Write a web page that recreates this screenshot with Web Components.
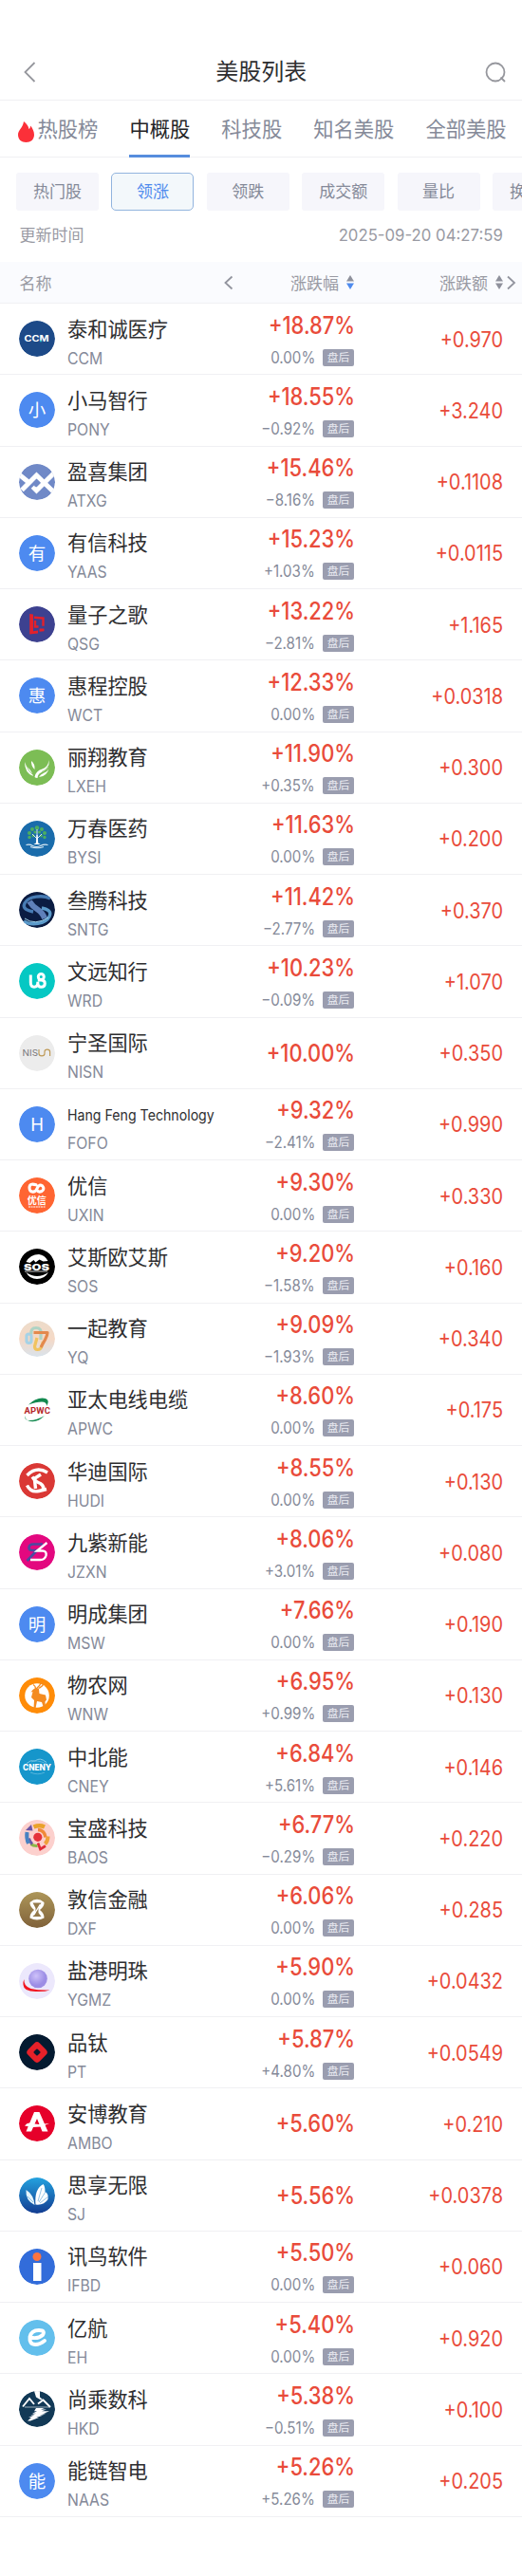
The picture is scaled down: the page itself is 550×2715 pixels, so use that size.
<!DOCTYPE html>
<html lang="zh-CN">
<head>
<meta charset="utf-8">
<title>美股列表</title>
<style>
  body {
    margin: 0;
    background: #fff;
    color: #2e2e30;
    font-family: Inter, "Noto Sans CJK SC", sans-serif;
    --up: #e94b3a;
    --blue: #4f8bee;
    --grey: #999aa3;
    --slate: #858a99;
    --line: #f0f0f3;
  }
</style>
</head>
<body>
<stock-page></stock-page>

<script>
  const STOCKS = [
    ['泰和诚医疗', 'CCM', '+18.87%', '0.00%', '+0.970'],
    ['小马智行', 'PONY', '+18.55%', '-0.92%', '+3.240'],
    ['盈喜集团', 'ATXG', '+15.46%', '-8.16%', '+0.1108'],
    ['有信科技', 'YAAS', '+15.23%', '+1.03%', '+0.0115'],
    ['量子之歌', 'QSG', '+13.22%', '-2.81%', '+1.165'],
    ['惠程控股', 'WCT', '+12.33%', '0.00%', '+0.0318'],
    ['丽翔教育', 'LXEH', '+11.90%', '+0.35%', '+0.300'],
    ['万春医药', 'BYSI', '+11.63%', '0.00%', '+0.200'],
    ['叁腾科技', 'SNTG', '+11.42%', '-2.77%', '+0.370'],
    ['文远知行', 'WRD', '+10.23%', '-0.09%', '+1.070'],
    ['宁圣国际', 'NISN', '+10.00%', '', '+0.350'],
    ['Hang Feng Technology', 'FOFO', '+9.32%', '-2.41%', '+0.990'],
    ['优信', 'UXIN', '+9.30%', '0.00%', '+0.330'],
    ['艾斯欧艾斯', 'SOS', '+9.20%', '-1.58%', '+0.160'],
    ['一起教育', 'YQ', '+9.09%', '-1.93%', '+0.340'],
    ['亚太电线电缆', 'APWC', '+8.60%', '0.00%', '+0.175'],
    ['华迪国际', 'HUDI', '+8.55%', '0.00%', '+0.130'],
    ['九紫新能', 'JZXN', '+8.06%', '+3.01%', '+0.080'],
    ['明成集团', 'MSW', '+7.66%', '0.00%', '+0.190'],
    ['物农网', 'WNW', '+6.95%', '+0.99%', '+0.130'],
    ['中北能', 'CNEY', '+6.84%', '+5.61%', '+0.146'],
    ['宝盛科技', 'BAOS', '+6.77%', '-0.29%', '+0.220'],
    ['敦信金融', 'DXF', '+6.06%', '0.00%', '+0.285'],
    ['盐港明珠', 'YGMZ', '+5.90%', '0.00%', '+0.0432'],
    ['品钛', 'PT', '+5.87%', '+4.80%', '+0.0549'],
    ['安博教育', 'AMBO', '+5.60%', '', '+0.210'],
    ['思享无限', 'SJ', '+5.56%', '', '+0.0378'],
    ['讯鸟软件', 'IFBD', '+5.50%', '0.00%', '+0.060'],
    ['亿航', 'EH', '+5.40%', '0.00%', '+0.920'],
    ['尚乘数科', 'HKD', '+5.38%', '-0.51%', '+0.100'],
    ['能链智电', 'NAAS', '+5.26%', '+5.26%', '+0.205']
  ];

  // [disc colour, artwork], drawn in a 38 x 38 box and clipped to the disc
  const LOGOS = {
    CCM: ['#1d4a88', `
      <text x="5.500" y="22.200" font-size="8.500" font-weight="700" fill="#fff" textLength="26" lengthAdjust="spacingAndGlyphs">CCM</text>
      <path d="M22 20.800h2v1.500h-2z" fill="#28c4cc"/>`],
    ATXG: ['#7089c7', `
      <g fill="none" stroke="#fff" stroke-width="5">
        <path d="M3 27.500 18.500 12 36 29"/>
        <path d="M37 9.500 18.500 28l-4-4"/>
        <path d="M0 11l11 9"/>
      </g>
      <path d="M15 19.500l3.500-3.500 3.500 3.500-5 5z" fill="#7089c7"/>`],
    QSG: ['#3d4190', `
      <path d="M11.200 8 15 8.400v17.800l5-.6v2.800l-8.800 1.200z" fill="#e3212b"/>
      <path d="M16 11.800l9.500.8v8.200M17 15v6.500h3.500" fill="none" stroke="#e3212b" stroke-width="2.400"/>
      <path d="M21.500 23.500h5v2.800l-5 .5z" fill="#e3212b"/>`],
    LXEH: ['#7cbd55', `
      <g fill="#fff">
        <path d="M6 13q0 12 9 15-2-6-5-8.500Q7 17 6 13z"/>
        <path d="M13 12q4 3 3.500 9-4-4-3.500-9z"/>
        <path d="M31.500 11q-1 8-7 9.500-7 2-8 8.500 1 1 3 1 0-5 6.500-7 6.500-3 5.500-12z"/>
        <path d="M32 18q-1 5-5.500 6.500-4 1.500-5.500 4.500 9-.5 11-11z"/>
      </g>
      <path d="M8 17q2 6 6 9M31 17q-2 5-7 6.500" stroke="#7cbd55" stroke-width=".7" fill="none"/>`],
    BYSI: ['#1a6cab', `
      <g fill="#4bad60">
        <circle cx="19" cy="7.500" r="2.300"/><circle cx="14" cy="9" r="2"/><circle cx="24" cy="9" r="2"/>
        <circle cx="11" cy="13" r="2"/><circle cx="27" cy="13" r="2"/><circle cx="17" cy="12" r="1.600"/>
        <circle cx="21.500" cy="12" r="1.600"/><circle cx="11" cy="17.500" r="1.700"/><circle cx="27" cy="17.500" r="1.700"/>
        <circle cx="15" cy="16" r="1.400"/><circle cx="23.500" cy="16" r="1.400"/>
      </g>
      <path d="M19 9v14M19 19l-5-5M19 19l5-5" stroke="#e9f4f8" stroke-width=".9" fill="none"/>
      <path d="M18.500 15h1.100l.6 8.500 2.500 1.500h-7.400l2.600-1.500z" fill="#fff"/>
      <path d="M7.500 25.500q4-1 7 1 4 2 8 0 4-2 8-1M12 27.500q7 2.500 14 0" stroke="#dcebf4" stroke-width="1.200" fill="none"/>`],
    SNTG: ['#0b1c42', `
      <g fill="none" stroke-width="3.400">
        <path d="M33 7C25 3 10 4.500 6 12c-3 6 4 8 9 9" stroke="#477bb3"/>
        <path d="M11 10q3 5 8.500 8.500T27 28" stroke="#5f80ba" stroke-width="6"/>
        <path d="M5 31c8 5 23 3 27-5 3-6-3-8-8-9" stroke="#5b9aca"/>
      </g>
      <path d="M6 28q11 8 25-1" stroke="#a4d6ed" fill="none"/>`],
    WRD: ['#05c8c3', `
      <g fill="none" stroke="#fff" stroke-width="3" stroke-linejoin="round">
        <path d="M12.300 12.500v8q0 4.700 3.700 4.700t3.800-4.500v-1M19.800 20.700q0 4.500 3.500 4.500 4 0 4-3.800 0-3.500-4-3.500h-3.500"/>
        <circle cx="23.300" cy="14.500" r="3"/>
      </g>`],
    NISN: ['#ececec', `
      <text x="3.500" y="22.200" font-size="9.500" fill="#77777a" textLength="16.500" lengthAdjust="spacingAndGlyphs">NIS</text>
      <path d="M21 15v4.500q0 2.300 3 2.300t3-2.300v-2q0-2.300 2.800-2.300t2.800 2.300V22" fill="none" stroke="#bf9b59" stroke-width="1.200"/>`],
    UXIN: ['#ff6532', `
      <path d="M18 7.800q-7-2.300-7 3 0 4.500 4 4.300 3.200-.3 4.500-4.300 2-4 5-2 3 3.300-.5 5.700-3.500 1.500-5-1" fill="none" stroke="#fff" stroke-width="3.100" stroke-linecap="round"/>
      <text x="8.800" y="28.300" font-size="10" font-weight="700" fill="#fff">优信</text>
      <path d="M10 31h18" stroke="#fff" stroke-width="1.200" stroke-dasharray="2 .6"/>`],
    SOS: ['#000', `
      <path d="M7.500 14Q12 6 21 6q6 .5 9.500 7l-5 .5-4-2-4 3-2-2.500-4 3z" fill="#fff"/>
      <path d="M31 25q-4 7-12 7T7.500 25Q19 33 31 25z" fill="#fff"/>
      <text x="5" y="22.600" font-size="9" font-weight="900" fill="#fff" textLength="27" lengthAdjust="spacingAndGlyphs">SOS</text>
      <path d="M6 24h24" stroke="#fff" stroke-width=".8"/>`],
    YQ: ['url(#dawn)', `
      <g fill="none" stroke-width="3.200" stroke-linejoin="round">
        <path d="M8 16v5q0 2.500 2.500 2.500T13 21v-5q0-2-2.500-2T8 16z" stroke="#a5d2e7"/>
        <path d="M13 14q-1-6.500 5-6.500t5 6.500v6" stroke="#aed3c4"/>
        <path d="M19 18l-2.500 9q0 3.500 3 3.500t4-2.500l2-6" stroke="#f1c35f"/>
        <path d="M15.500 12.500H30q0 3-2.500 7.500L23 28" stroke="#e3894d"/>
      </g>`],
    APWC: ['#fff', `
      <path d="M10 13.500Q19 5 28 7q5 2 1 8 .5-4.500-5-4.500-6 0-14 3z" fill="#12894f"/>
      <path d="M7 24.500q-2 5 3 5.500 8 .5 17-5-9 9-18 5-3-2-2-5.500z" fill="#12894f"/>
      <text x="5.500" y="22.600" font-size="9.500" font-weight="700" fill="#b5272b" textLength="27.500" lengthAdjust="spacing" font-family="Roboto">APWC</text>`],
    HUDI: ['#da3835', `
      <g fill="none" stroke="#fff" stroke-width="3.400">
        <path d="M8.500 13q10-10 21.500-3"/>
        <path d="M23 12l-7 4.500q1 3 6.500 5 5 3 2 8"/>
        <path d="M8.500 23.500q4 8 12.500 6l8-2"/>
        <path d="M14 14.500l2.500 3.500 1 9"/>
      </g>`],
    JZXN: ['#e3087f', `
      <g fill="none">
        <path d="M25 10.500H15q-4 0-4.500 3.500-.2 3 3.500 3h5L8.500 28" stroke="#4b4aa0" stroke-width="2.600"/>
        <path d="M29.500 9 19 17.500h6q4.500.5 3.500 5-1.300 4.500-6 4.500H12" stroke="#fff" stroke-width="2.400"/>
      </g>`],
    WNW: ['#ff8c08', `
      <circle cx="19" cy="19" r="12.800" fill="#fff"/>
      <path d="M14.500 13l3.500-2.500 3 1.500.5 5 6.500 1.500 1 5-1.500 2 .5 6.500H26l-2-6-5-1-1.500 7.500h-2l.5-8.500-3-3 1.500-6-2 .5z" fill="#f48b20"/>
      <path d="M17.500 11.500q0-2.500-2.500-4M19 11q3-2 4.500-6M20.500 11.500q4.500-2 6-6" fill="none" stroke="#f48b20" stroke-width="1.300"/>`],
    CNEY: ['#1696cb', `
      <path d="M8 15.500q4-4 9-2.500 5-4.500 12 1.500" fill="none" stroke="#8dcfe9" stroke-width=".9"/>
      <path d="M13 14q5-3 16 2M12 25q8 3.500 15 0" fill="none" stroke="#65bbdf" stroke-width=".8"/>
      <text x="4" y="22.500" font-size="8.500" font-weight="800" fill="#fff" textLength="30" lengthAdjust="spacingAndGlyphs">CNENY</text>`],
    BAOS: ['#fcd0cd', `
      <g fill="none" stroke-width="4">
        <path d="M15.500 7.500q6-2.500 11.500 0" stroke="#eaa22b" stroke-width="4.500"/>
        <path d="M20 10.500q7 .5 8 8" stroke="#f08939" stroke-width="3.500"/>
        <path d="M30.500 17.500q0 5-3 8" stroke="#efa13a"/>
        <path d="M12.500 25.500q3 2.500 7 2" stroke="#8cb849" stroke-width="3"/>
        <path d="M10.500 19.500q1 4 3.500 6" stroke="#6955a5" stroke-width="3"/>
        <path d="M8.500 13q-1 6 1.500 12" stroke="#4882c1"/>
      </g>
      <path d="M7 11l6-6 1.500 6.500z" fill="#6955a5"/>
      <circle cx="19.800" cy="18.300" r="4.600" fill="#e5323b"/>
      <path d="M20 24.500l2.500 6.500 5.500-3.500" fill="none" stroke="#df2c37" stroke-width="2.700"/>`],
    DXF: ['url(#bronze)', `
      <path d="M11.500 11q7.500-6.500 15 0 .5 4-4.500 8 5 4 4.500 8.500-7.500 4-15 0Q11 23 16 19q-5-4-4.500-8z" fill="#fff"/>
      <path d="M14.500 11.500h9l-3 5.500v5l3 4h-9l3-4v-5z" fill="#94794a"/>
      <path d="M15.500 24.500l7-11.500" stroke="#fff" stroke-width="1.300"/>`],
    YGMZ: ['#ece8fc', `
      <circle cx="20" cy="16.500" r="9.800" fill="url(#pearl)"/>
      <path d="M5.500 17q-1 7 7 10 8 1.800 20 1.500-6 2-15 1.500Q5 30 4.500 23q-.3-4 1-6z" fill="#f21420"/>`],
    PT: ['#041a30', `
      <rect x="10.300" y="10.300" width="17.400" height="17.400" rx="4" fill="#e62129" transform="rotate(45 19 19)"/>
      <rect x="16.200" y="16.200" width="5.600" height="5.600" rx="1" fill="#041a30" transform="rotate(45 19 19)"/>`],
    AMBO: ['#e6002a', `
      <path d="M16 7h5.500L30.500 27.500h-6L19 14l-6 13.500H7.500z" fill="#fff"/>
      <path d="M6 21.500q3-4 7-2.500l8 1 11-1-9 3.500-9 .5z" fill="#fff"/>`],
    SJ: ['url(#sea)', `
      <path d="M7.500 13q-1 11 9 16-1-11-9-16z" fill="#e5f5fc"/>
      <path d="M17.500 28.500Q16 12 25.500 7q2 2 2 8 4 2 3 8-4 6.500-13 5.500z" fill="#fff"/>
      <path d="M9 20l6 6M20 25l4-14M21 26l7-11M22 27l9-7" stroke="#69a9d8" fill="none" stroke-width=".7"/>`],
    IFBD: ['#326cda', `
      <circle cx="19" cy="8.500" r="4.500" fill="#fb7440"/>
      <path d="M15 15h8.500v19H15z" fill="#fff"/>`],
    EH: ['#63bfec', `
      <path d="M12 18.500q8 2 13-2.500 3-5-4-5-8 0-9.500 7-1 8 6 8 4.500 0 9.500-4" fill="none" stroke="#fff" stroke-width="3.900" stroke-linecap="round"/>`],
    HKD: ['#123956', `
      <path d="M16 0h6v6.500l3 2.500-2 .5-5-3z" fill="#fff"/>
      <path d="M4 16.500 11 8l5 6M20 13.500l5.500-4L33 17" fill="none" stroke="#fff" stroke-width="1.900"/>
      <path d="M6 17h26" stroke="#fff" stroke-width=".6"/>
      <path d="M18 18h9l-4 1.600h6l-5 1.600h8l-6 2.600h3l-7 1.600h4l-8 2.600h3l-9 3.500H9l4-3.500h-3l6-2.600h-4l6-1.600h-4l5-2.600h-3z" fill="#fff"/>`]
  };

  class StockLogo extends HTMLElement {
    connectedCallback() {
      const code = this.getAttribute('code');
      const [fill, art] = LOGOS[code] || ['#4d8af0', `
        <text x="19" y="25.700" font-size="18.500" fill="#fff" text-anchor="middle">${this.getAttribute('letter')}</text>`];
      this.attachShadow({ mode: 'open' }).innerHTML = `
        <style>
          :host { display: block; width: 38px; height: 38px; border-radius: 50%; overflow: hidden; }
          svg { display: block; }
        </style>
        <svg width="38" height="38" viewBox="0 0 38 38">
          <defs>
            <radialGradient id="pearl" cx=".4" cy=".35">
              <stop offset="0" stop-color="#cec2fa"/><stop offset="1" stop-color="#9c8de5"/>
            </radialGradient>
            <linearGradient id="sea" x2="0" y2="1">
              <stop offset="0" stop-color="#24a2df"/><stop offset="1" stop-color="#123c91"/>
            </linearGradient>
            <linearGradient id="dawn" x2="0" y2="1">
              <stop offset="0" stop-color="#ecdccb"/><stop offset=".5" stop-color="#f5d9c6"/><stop offset="1" stop-color="#d9e3ec"/>
            </linearGradient>
            <linearGradient id="bronze" x2="0" y2="1">
              <stop offset="0" stop-color="#ad9659"/><stop offset="1" stop-color="#80623a"/>
            </linearGradient>
          </defs>
          <circle cx="19" cy="19" r="19" fill="${fill}"/>
          ${art}
        </svg>`;
    }
  }

  class PageHeader extends HTMLElement {
    constructor() {
      super();
      this.attachShadow({ mode: 'open' }).innerHTML = `
        <style>
          :host {
            box-sizing: border-box;
            display: flex;
            align-items: center;
            justify-content: space-between;
            height: 106px;
            padding: 46px 17px 0 24.500px;
            border-bottom: 1px solid var(--line);
          }
          .title { font-size: 24px; line-height: 32px; padding-right: 5px; }
          svg { fill: none; stroke: #96979d; stroke-width: 1.8; }
        </style>
        <svg width="20" height="22"><path d="M11.500 1 1.500 11l10 10"/></svg>
        <span class="title"><slot></slot></span>
        <svg width="22" height="22"><circle cx="11" cy="11" r="9.500"/><path d="M16.500 16.500l4.500 4.500"/></svg>`;
    }
  }

  class MarketTabs extends HTMLElement {
    constructor() {
      super();
      this.attachShadow({ mode: 'open' }).innerHTML = `
        <style>
          :host {
            box-sizing: border-box;
            display: flex;
            height: 60px;
            padding-left: 18.500px;
            gap: 33px;
            border-bottom: 1px solid var(--line);
            font-size: 21.300px;
            line-height: 60px;
            white-space: nowrap;
            color: var(--slate);
          }
          span { flex: none; box-sizing: border-box; height: 60px; }
          .hot { display: flex; align-items: center; gap: 4px; }
          .hot svg { margin-top: 5px; }
          .on { color: #242426; border-bottom: 3px solid #568ddd; }
        </style>
        <span class="hot">
          <svg width="17" height="22" viewBox="0 0 17 22"><path d="M6 0c3 2 5 5 5.500 8 1-.5 1.500-2 1.500-3.500 2 2 4 6 4 9.500 0 5-3.500 8-8.500 8S0 19 0 14C0 9 5 7 6 0z" fill="#fb3039"/></svg>
          热股榜
        </span>
        <span class="on">中概股</span>
        <span>科技股</span>
        <span>知名美股</span>
        <span>全部美股</span>`;
    }
  }

  class FilterChips extends HTMLElement {
    constructor() {
      super();
      this.attachShadow({ mode: 'open' }).innerHTML = `
        <style>
          :host {
            display: flex;
            gap: 13.400px;
            padding: 16px 0 0 17px;
            overflow: hidden;
            font-size: 17px;
            color: var(--slate);
          }
          span {
            flex: none;
            box-sizing: border-box;
            width: 87px;
            height: 40px;
            line-height: 40px;
            text-align: center;
            border-radius: 3px;
            background: #f6f6fb;
          }
          .on { line-height: 38px; border: 1px solid #92b4de; border-radius: 5px; background: #f3f8fb; color: var(--blue); }
        </style>
        <span>热门股</span>
        <span class="on">领涨</span>
        <span>领跌</span>
        <span>成交额</span>
        <span>量比</span>
        <span>换手率</span>`;
    }
  }

  class UpdateTime extends HTMLElement {
    constructor() {
      super();
      this.attachShadow({ mode: 'open' }).innerHTML = `
        <style>
          :host {
            display: flex;
            justify-content: space-between;
            height: 54px;
            padding: 0 20.500px 0 20.500px;
            font-size: 17px;
            line-height: 53px;
            color: var(--grey);
          }
          .time { transform: scaleX(.985); transform-origin: right; }
        </style>
        <span>更新时间</span>
        <span class="time"><slot></slot></span>`;
    }
  }

  class SortArrows extends HTMLElement {
    constructor() {
      super();
      this.attachShadow({ mode: 'open' }).innerHTML = `
        <style>:host { display: block; } svg { display: block; }</style>
        <svg width="8" height="15" viewBox="0 0 8 15">
          <path d="M4 0l4 6.500H0z" fill="#8f919c"/>
          <path d="M4 15l4-6.500H0z" fill="${this.hasAttribute('down') ? '#4f8bee' : '#8f919c'}"/>
        </svg>`;
    }
  }

  class TableHead extends HTMLElement {
    constructor() {
      super();
      this.attachShadow({ mode: 'open' }).innerHTML = `
        <style>
          :host {
            box-sizing: border-box;
            display: grid;
            grid-template-columns: 215px 137.500px 157px auto;
            align-items: center;
            height: 44px;
            padding-left: 20.500px;
            border-bottom: 1px solid var(--line);
            background: #fafbfe;
            font-size: 17px;
            color: var(--grey);
          }
          div { display: flex; align-items: center; gap: 8px; }
          .col { justify-content: flex-end; }
          .pct { justify-content: space-between; }
          svg { display: block; fill: none; stroke: #92949e; stroke-width: 1.800; }
          .next { margin-left: 4px; }
        </style>
        <span>名称</span>
        <div class="pct">
          <svg width="10" height="16"><path d="M8.500 1.500 1.500 8l7 6.500"/></svg>
          <div>涨跌幅<sort-arrows down></sort-arrows></div>
        </div>
        <div class="col">涨跌额<sort-arrows></sort-arrows></div>
        <svg class="next" width="10" height="16"><path d="M1 1.500 8 8l-7 6.500"/></svg>`;
    }
  }

  class StockRow extends HTMLElement {
    connectedCallback() {
      const [name, code, pct, after, change] = this.data;
      const small = name.length > 8 ? 'small' : '';
      const sub = after
        ? `<div class="sub"><span class="num">${after.replace('-', '−')}</span><span class="badge">盘后</span></div>`
        : '';
      this.attachShadow({ mode: 'open' }).innerHTML = `
        <style>
          :host {
            box-sizing: border-box;
            display: grid;
            grid-template-columns: 51px 182px 120px 157px;
            align-items: center;
            height: 75.260px;
            padding-left: 20px;
            border-bottom: 1px solid var(--line);
          }
          .who { align-self: start; padding-top: 12.500px; white-space: nowrap; }
          .name { height: 33px; font-size: 21.200px; line-height: 28px; }
          .small { font-size: 16px; line-height: 30px; transform: scaleX(.885); transform-origin: left; }
          .code {
            font-size: 16.800px; line-height: 24px; color: var(--slate);
            transform: scaleX(.94); transform-origin: left;
          }
          .pct, .change, .num { transform-origin: right; }
          .pct {
            font-size: 25px; line-height: 28px; font-weight: 500; color: var(--up); text-align: right;
            transform: translateX(1px) scaleX(.875);
          }
          .change { font-size: 22.500px; color: var(--up); text-align: right; transform: scaleX(.885); }
          .sub {
            display: flex;
            align-items: center;
            justify-content: flex-end;
            gap: 8px;
            height: 18px;
            margin-top: 11px;
            font-size: 16.800px;
            color: var(--slate);
          }
          .num { transform: scaleX(.9); }
          .badge {
            width: 33px;
            height: 18px;
            border-radius: 2px;
            background: #9a9daf;
            color: #e9eaf1;
            font-size: 11.800px;
            line-height: 18px;
            text-align: center;
          }
        </style>
        <stock-logo code="${code}" letter="${name[0]}"></stock-logo>
        <div class="who">
          <div class="name ${small}">${name}</div>
          <div class="code">${code}</div>
        </div>
        <div>
          <div class="pct">${pct}</div>
          ${sub}
        </div>
        <div class="change">${change}</div>`;
    }
  }

  class StockPage extends HTMLElement {
    connectedCallback() {
      this.attachShadow({ mode: 'open' }).innerHTML = `
        <style>
          :host { display: block; width: 550px; height: 2715px; overflow: hidden; }
        </style>
        <page-header>美股列表</page-header>
        <market-tabs></market-tabs>
        <filter-chips></filter-chips>
        <update-time>2025-09-20 04:27:59</update-time>
        <table-head></table-head>
        <main></main>`;
      const list = this.shadowRoot.querySelector('main');
      STOCKS.forEach((data) => {
        const row = document.createElement('stock-row');
        row.data = data;
        list.appendChild(row);
      });
    }
  }

  window.customElements.define('stock-logo', StockLogo);
  window.customElements.define('page-header', PageHeader);
  window.customElements.define('market-tabs', MarketTabs);
  window.customElements.define('filter-chips', FilterChips);
  window.customElements.define('update-time', UpdateTime);
  window.customElements.define('sort-arrows', SortArrows);
  window.customElements.define('table-head', TableHead);
  window.customElements.define('stock-row', StockRow);
  window.customElements.define('stock-page', StockPage);
</script>
</body>
</html>
